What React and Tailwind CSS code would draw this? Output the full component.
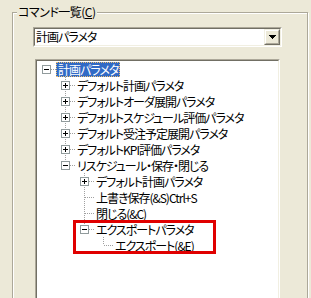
import React from 'react';

const FONT = { fontFamily: '"Noto Sans CJK JP", "Noto Sans", sans-serif' };

const tree = {
  label: '計画パラメタ',
  open: true,
  selected: true,
  children: [
    { label: 'デフォルト計画パラメタ', collapsed: true },
    { label: 'デフォルトオーダ展開パラメタ', collapsed: true },
    { label: 'デフォルトスケジュール評価パラメタ', collapsed: true },
    { label: 'デフォルト受注予定展開パラメタ', collapsed: true },
    { label: 'デフォルトKPI評価パラメタ', collapsed: true },
    {
      label: 'リスケジュール・保存・閉じる',
      open: true,
      children: [
        { label: 'デフォルト計画パラメタ', collapsed: true },
        { label: '上書き保存(&S)Ctrl+S' },
        { label: '閉じる(&C)' },
        {
          label: 'エクスポートパラメタ',
          open: true,
          children: [{ label: 'エクスポート(&E)' }],
        },
      ],
    },
  ],
};

// flatten tree into rows; ancestors = whether each ancestor column keeps a vertical line
function flatten(node, ancestors, isLast, isRoot, out) {
  out.push({ node, ancestors, isLast, isRoot });
  if (node.open && node.children) {
    node.children.forEach((c, i) => {
      flatten(c, isRoot ? ancestors : [...ancestors, !isLast], i === node.children.length - 1, false, out);
    });
  }
  return out;
}

const DOT = '#a0a0a0';

function AncestorCell({ line }) {
  return (
    <svg width="19" height="16" className="shrink-0 block" shapeRendering="crispEdges">
      {line && <line x1="9.5" y1="0" x2="9.5" y2="16" stroke={DOT} strokeDasharray="1 1" />}
    </svg>
  );
}

function NodeCell({ isRoot, isLast, expandable, open }) {
  return (
    <svg width="19" height="16" className="shrink-0 block" shapeRendering="crispEdges">
      {!isRoot && <line x1="9.5" y1="0" x2="9.5" y2={isLast ? 8 : 16} stroke={DOT} strokeDasharray="1 1" />}
      <line x1="10" y1="8.5" x2="19" y2="8.5" stroke={DOT} strokeDasharray="1 1" />
      {expandable && (
        <g>
          <rect x="5.5" y="4.5" width="8" height="8" fill="#fff" stroke="#919b9c" />
          <line x1="7" y1="8.5" x2="12" y2="8.5" stroke="#000" />
          {!open && <line x1="9.5" y1="6" x2="9.5" y2="11" stroke="#000" />}
        </g>
      )}
    </svg>
  );
}

function Row({ row }) {
  const { node, ancestors, isLast, isRoot } = row;
  const expandable = node.collapsed || (node.children && node.children.length > 0);
  return (
    <div className="flex h-[16px] items-center">
      {!isRoot && <AncestorCell line={false} />}
      {ancestors.map((l, i) => (
        <AncestorCell key={i} line={l} />
      ))}
      <NodeCell isRoot={isRoot} isLast={isLast} expandable={expandable} open={node.open} />
      <span
        className={`whitespace-nowrap px-[2px] h-[15px] leading-[15px] tracking-[-1px] ${
          node.selected ? 'bg-[#316ac5] text-white outline-1 outline-dotted outline-[#f0c070] -outline-offset-1' : 'text-black'
        }`}
      >
        {node.label}
      </span>
    </div>
  );
}

export default function App() {
  const rows = flatten(tree, [], true, true, []);
  return (
    <div
      className="w-[311px] h-[298px] overflow-hidden bg-[#ece9d8] text-[12px] text-black [font-feature-settings:'palt']"
      style={FONT}
    >
      <fieldset className="ml-[12px] mt-[5px] w-[296px] h-[400px] p-0 border border-[#aca899] shadow-[inset_1px_1px_0_#fff,1px_1px_0_#fff]">
        <legend className="ml-[4px] px-[1px] leading-[14px] tracking-[-0.5px] bg-[#ece9d8]">
          コマンド一覧(<span className="underline">C</span>)
        </legend>
        <div className="pl-[20px] pt-[8px]">
          {/* combobox */}
          <div className="w-[249px] h-[20px] border border-t-[#aca899] border-l-[#aca899] border-b-white border-r-white">
            <div className="h-full flex items-stretch border border-t-[#716f64] border-l-[#716f64] border-b-[#f1efe2] border-r-[#f1efe2] bg-white">
              <div className="flex-1 pl-[1px] leading-[16px] tracking-[-1px] whitespace-nowrap">計画パラメタ</div>
              <div className="w-[16px] border border-t-[#f1efe2] border-l-[#f1efe2] border-b-[#716f64] border-r-[#716f64]">
                <div className="h-full flex items-center justify-center bg-[#ece9d8] border border-t-white border-l-white border-b-[#aca899] border-r-[#aca899]">
                  <svg width="7" height="4" shapeRendering="crispEdges">
                    <path d="M0 0H7L3.5 4Z" fill="#000" />
                  </svg>
                </div>
              </div>
            </div>
          </div>
          {/* tree */}
          <div className="relative ml-[2px] mt-[12px] w-[245px] h-[260px] border border-t-[#aca899] border-l-[#aca899] border-b-white border-r-white">
            <div className="h-full border border-t-[#716f64] border-l-[#716f64] border-b-[#f1efe2] border-r-[#f1efe2] bg-white">
              {rows.map((r, i) => (
                <Row key={i} row={r} />
              ))}
            </div>
            <div className="absolute left-[37px] top-[160px] w-[143px] h-[34px] border-[3px] border-[#e00000]" />
          </div>
        </div>
      </fieldset>
    </div>
  );
}
